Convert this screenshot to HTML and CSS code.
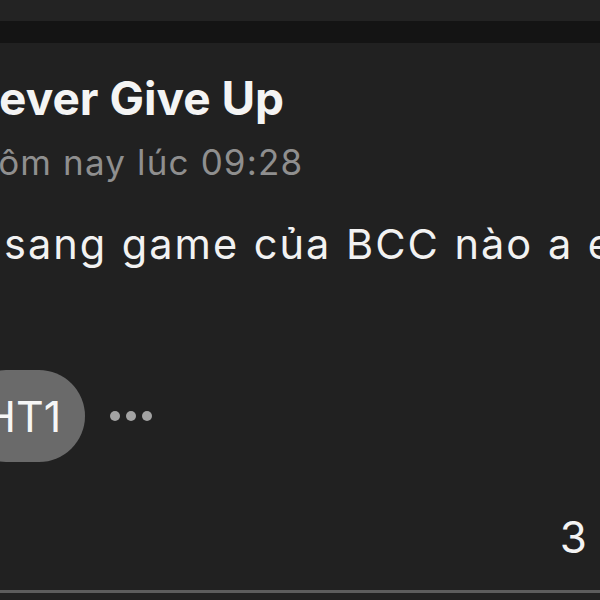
FILE: index.html
```html
<!DOCTYPE html>
<html lang="vi">
<head>
<meta charset="utf-8">
<link rel="stylesheet" href="styles.css">
</head>
<body>
<div class="screen">
  <div class="top-strip"></div>
  <div class="separator"></div>
  <div class="post">
    <div class="name">Never Give Up</div>
    <div class="time">Hôm nay lúc 09:28</div>
    <div class="message">sang game của BCC nào a em</div>
    <div class="actions">
      <span class="tag">HT1</span>
      <span class="more"><i></i><i></i><i></i></span>
    </div>
    <div class="count">3</div>
  </div>
  <div class="bottom-rule"></div>
</div>
</body>
</html>
```

FILE: styles.css
```css
html, body {
  margin: 0;
  padding: 0;
  background: #212121;
}
.screen {
  width: 600px;
  height: 600px;
  overflow: hidden;
  display: flex;
  flex-direction: column;
  background: #212121;
  font-family: Inter, "Liberation Sans", sans-serif;
}
.top-strip {
  height: 21px;
  background: #232323;
  flex: none;
}
.separator {
  height: 22px;
  background: #141414;
  flex: none;
}
.post {
  display: flex;
  flex-direction: column;
  padding-top: 27px;
  flex: none;
}
.name {
  font-size: 46px;
  line-height: 56px;
  font-weight: 700;
  color: #f4f4f4;
  margin-left: -36px;
  white-space: nowrap;
}
.time {
  font-size: 35px;
  line-height: 40px;
  letter-spacing: 1.15px;
  color: #8f8f8f;
  margin-top: 16px;
  margin-left: -29px;
  white-space: nowrap;
}
.message {
  font-size: 41.5px;
  line-height: 48px;
  letter-spacing: 2px;
  word-spacing: 1px;
  color: #f2f2f2;
  margin-top: 38px;
  margin-left: 4px;
  white-space: nowrap;
}
.actions {
  display: flex;
  align-items: center;
  gap: 25px;
  margin-top: 102px;
  margin-left: -40px;
}
.tag {
  height: 92px;
  line-height: 92px;
  padding: 0 24px;
  border-radius: 46px;
  background: #6a6a6a;
  color: #f6f6f6;
  font-size: 43px;
}
.more {
  display: flex;
  gap: 6px;
}
.more i {
  width: 10px;
  height: 10px;
  border-radius: 50%;
  background: #a3a3a3;
}
.count {
  align-self: flex-end;
  font-size: 44px;
  line-height: 52px;
  color: #f4f4f4;
  margin-top: 49px;
  margin-right: 13px;
}
.bottom-rule {
  margin-top: 27px;
  height: 3px;
  background: #5c5c5c;
  flex: none;
}
```
